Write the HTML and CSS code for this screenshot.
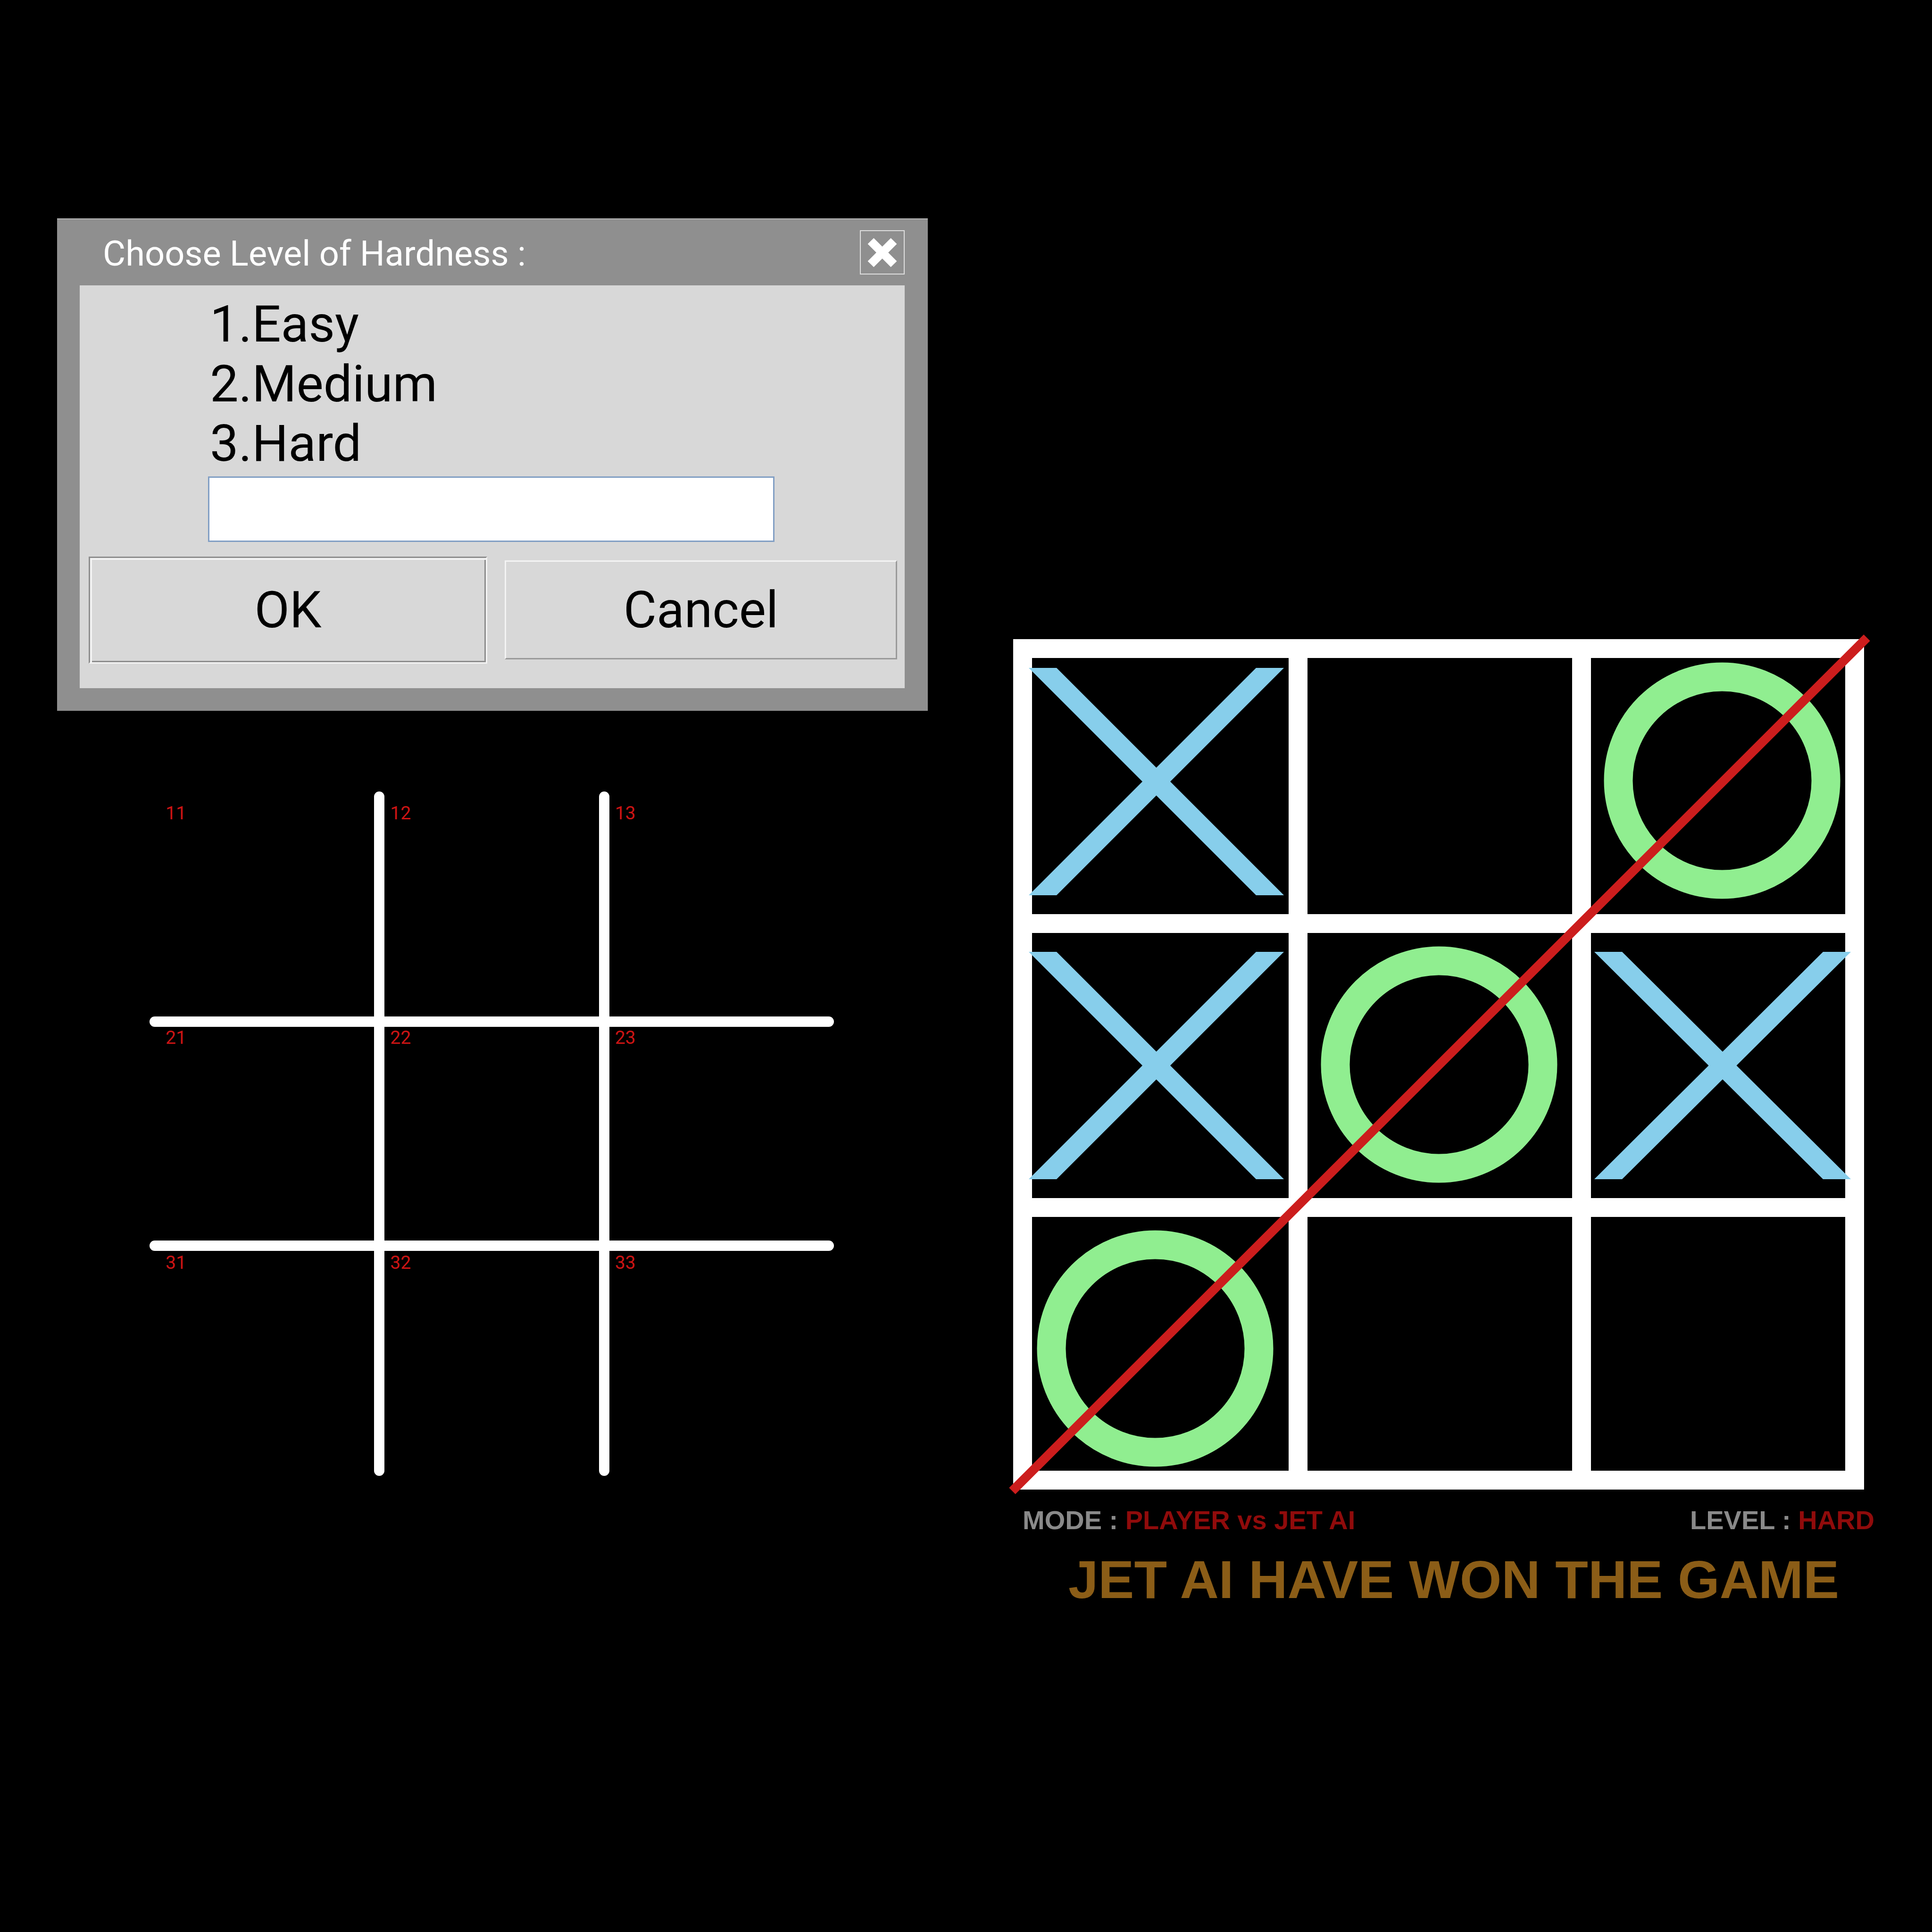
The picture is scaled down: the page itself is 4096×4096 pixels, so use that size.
FILE: index.html
```html
<!DOCTYPE html>
<html lang="en">
<head>
<meta charset="utf-8">
<title>Tic Tac Toe - JET AI</title>
<link rel="stylesheet" href="styles.css">
</head>
<body>
<div class="page">
  <div class="left">
    <div class="dialog">
      <div class="titlebar">
        <span class="title">Choose Level of Hardness :</span>
        <button class="close" aria-label="Close">
          <svg width="63" height="63" viewBox="0 0 63 63"><path d="M7 7L56 56M56 7L7 56" stroke="#ffffff" stroke-width="18" stroke-linecap="butt"/></svg>
        </button>
      </div>
      <div class="panel">
        <div class="options">
          <div>1.Easy</div>
          <div>2.Medium</div>
          <div>3.Hard</div>
        </div>
        <input class="field" type="text" aria-label="Level">
        <div class="buttons">
          <button class="btn ok">OK</button>
          <button class="btn cancel">Cancel</button>
        </div>
      </div>
    </div>

    <div class="lgrid">
      <svg class="lines" width="1451" height="1451">
        <g stroke="#ffffff" stroke-width="22" stroke-linecap="round">
          <line x1="487" y1="11" x2="487" y2="1440"/>
          <line x1="964" y1="11" x2="964" y2="1440"/>
          <line x1="11" y1="488" x2="1440" y2="488"/>
          <line x1="11" y1="963" x2="1440" y2="963"/>
        </g>
      </svg>
      <div class="lcells">
        <div class="lcell">11</div>
        <div class="lcell">12</div>
        <div class="lcell">13</div>
        <div class="lcell">21</div>
        <div class="lcell">22</div>
        <div class="lcell">23</div>
        <div class="lcell">31</div>
        <div class="lcell">32</div>
        <div class="lcell">33</div>
      </div>
    </div>
  </div>

  <div class="right">
    <div class="board">
      <div class="cell">
        <svg class="mark"><g fill="#87ceeb"><polygon points="-7,21 52,21 534,503 475,503"/><polygon points="475,21 534,21 52,503 -7,503"/></g></svg>
      </div>
      <div class="cell"></div>
      <div class="cell">
        <svg class="mark"><circle cx="278" cy="260" r="220" fill="none" stroke="#90ee90" stroke-width="61"/></svg>
      </div>
      <div class="cell">
        <svg class="mark"><g fill="#87ceeb"><polygon points="-7,40 52,40 534,522 475,522"/><polygon points="475,40 534,40 52,522 -7,522"/></g></svg>
      </div>
      <div class="cell">
        <svg class="mark"><circle cx="279" cy="279" r="220" fill="none" stroke="#90ee90" stroke-width="61"/></svg>
      </div>
      <div class="cell">
        <svg class="mark"><g fill="#87ceeb"><polygon points="7,40 66,40 551,522 492,522"/><polygon points="492,40 551,40 66,522 7,522"/></g></svg>
      </div>
      <div class="cell">
        <svg class="mark"><circle cx="261" cy="279" r="220" fill="none" stroke="#90ee90" stroke-width="61"/></svg>
      </div>
      <div class="cell"></div>
      <div class="cell"></div>
      <svg class="strike" width="1804" height="1803"><line x1="-2" y1="1806" x2="1810" y2="-3" stroke="#cc1d1d" stroke-width="19"/></svg>
    </div>
    <div class="status">
      <span>MODE : <span class="hl">PLAYER vs JET AI</span></span>
      <span>LEVEL : <span class="hl">HARD</span></span>
    </div>
    <div class="won">JET AI HAVE WON THE GAME</div>
  </div>
</div>
</body>
</html>
```

FILE: styles.css
```css
html, body {
  margin: 0;
  padding: 0;
}

body {
  background: #000000;
  width: 4096px;
  height: 4096px;
  overflow: hidden;
  font-family: Roboto, "Noto Sans", sans-serif;
}

.page {
  display: flex;
  align-items: flex-start;
  padding-left: 121px;
}

.left {
  width: 1846px;
  padding-top: 463px;
  display: flex;
  flex-direction: column;
}

/* ---------- dialog ---------- */
.dialog {
  background: #8f8f8f;
  border-top: 2px solid #b9b9b9;
  padding: 0 49px 48px 48px;
}

.titlebar {
  height: 140px;
  display: flex;
  align-items: center;
  justify-content: space-between;
}

.title {
  font-family: Roboto, sans-serif;
  font-size: 74px;
  line-height: normal;
  color: #ffffff;
  margin-left: 49px;
  padding-top: 4px;
}

.close {
  width: 95px;
  height: 94px;
  box-sizing: border-box;
  border: 2px solid #dedede;
  background: transparent;
  padding: 0;
  display: flex;
  align-items: center;
  justify-content: center;
}

.close svg {
  display: block;
}

.panel {
  background: #d8d8d8;
  height: 854px;
  box-sizing: border-box;
  padding: 19px 16px 0 19px;
  display: flex;
  flex-direction: column;
  align-items: flex-start;
}

.options {
  margin-left: 257px;
  font-family: Roboto, sans-serif;
  font-size: 108px;
  line-height: 126.5px;
  color: #000000;
}

.field {
  margin: 6px 0 0 253px;
  width: 1201px;
  height: 139px;
  box-sizing: border-box;
  border: 3px solid #829fc4;
  background: #ffffff;
  padding: 0;
  outline: none;
}

.buttons {
  display: flex;
  align-items: center;
  gap: 37px;
  margin-top: 31px;
}

.btn {
  font-family: Roboto, sans-serif;
  font-size: 108px;
  line-height: 1;
  color: #000000;
  background: #d8d8d8;
  padding: 0;
  box-sizing: border-box;
}

.ok {
  width: 845px;
  height: 227px;
  border: 3px solid;
  border-color: #8e8e8e #f3f3f3 #f3f3f3 #8e8e8e;
  box-shadow: inset 4px 4px 0 #f3f3f3, inset -3px -3px 0 #8e8e8e;
}

.cancel {
  width: 832px;
  height: 210px;
  border: 3px solid;
  border-color: #f3f3f3 #9a9a9a #9a9a9a #f3f3f3;
}

/* ---------- left drawing grid ---------- */
.lgrid {
  margin: 171px 0 0 196px;
  width: 1451px;
  height: 1451px;
  box-sizing: border-box;
  padding: 11px;
  position: relative;
}

.lines {
  position: absolute;
  left: 0;
  top: 0;
}

.lcells {
  position: relative;
  height: 100%;
  display: grid;
  grid-template-columns: repeat(3, 1fr);
  grid-template-rows: repeat(3, 1fr);
}

.lcell {
  padding: 12px 0 0 23px;
  font-family: Roboto, sans-serif;
  font-size: 39px;
  line-height: normal;
  color: #cc1414;
}

/* ---------- right board ---------- */
.right {
  margin-left: 181px;
  padding-top: 1355px;
  width: 1804px;
}

.board {
  position: relative;
  display: grid;
  grid-template-columns: 544px 561px 539px;
  grid-template-rows: 543px 562px 538px;
  gap: 40px;
  padding: 40px;
  background: #ffffff;
  width: max-content;
}

.cell {
  background: #000000;
  position: relative;
}

.mark {
  position: absolute;
  left: 0;
  top: 0;
  width: 100%;
  height: 100%;
  overflow: visible;
}

.strike {
  position: absolute;
  left: 0;
  top: 0;
  overflow: visible;
  pointer-events: none;
}

.status {
  display: flex;
  justify-content: space-between;
  margin: 32px -22px 0 20px;
  font-family: "Liberation Sans", Arial, sans-serif;
  font-weight: bold;
  font-size: 56px;
  line-height: normal;
  color: #8a8a8a;
}

.hl {
  color: #900b0b;
}

.won {
  margin: 28px -22px 0 20px;
  padding-left: 22px;
  text-align: center;
  font-family: "Liberation Sans", Arial, sans-serif;
  font-weight: bold;
  font-size: 114px;
  line-height: normal;
  color: #8b5d17;
}
```
